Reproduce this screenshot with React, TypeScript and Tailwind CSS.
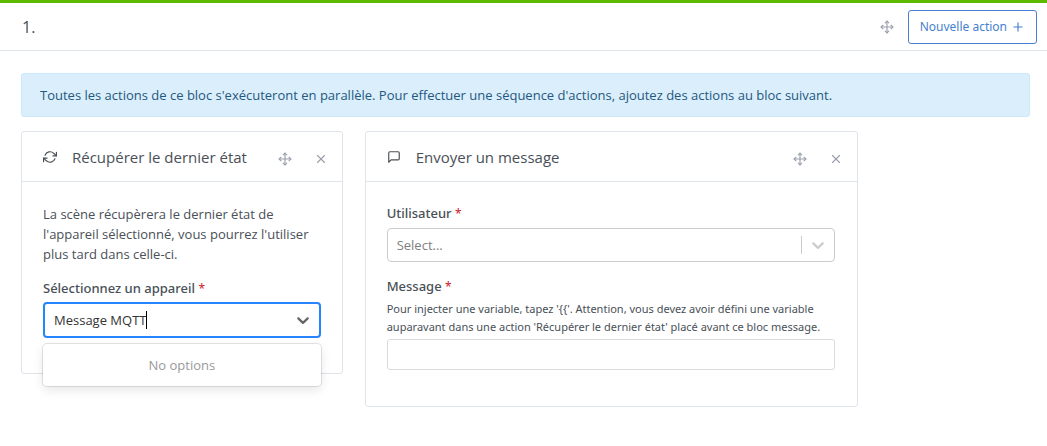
import { useState, type ReactNode } from 'react';
import { FiMessageSquare, FiMove, FiPlus, FiRefreshCw, FiX } from 'react-icons/fi';

const MESSAGE_HELP =
  "Pour injecter une variable, tapez '{{'. Attention, vous devez avoir défini une variable auparavant dans une action 'Récupérer le dernier état' placé avant ce bloc message.";

function Chevron() {
  return (
    <svg viewBox="0 0 20 20" className="size-5 fill-current" aria-hidden="true">
      <path d="M4.516 7.548c0.436-0.446 1.043-0.481 1.576 0l3.908 3.747 3.908-3.747c0.533-0.481 1.141-0.446 1.574 0 0.436 0.445 0.408 1.197 0 1.615-0.406 0.418-4.695 4.502-4.695 4.502-0.217 0.223-0.502 0.335-0.787 0.335s-0.57-0.112-0.789-0.335c0 0-4.287-4.084-4.695-4.502s-0.436-1.17 0-1.615z" />
    </svg>
  );
}

function Label({ htmlFor, children }: { htmlFor: string; children: ReactNode }) {
  return (
    <label
      htmlFor={htmlFor}
      className="block font-['Noto_Sans',sans-serif] text-[13px] leading-5 font-medium text-[#495057]"
    >
      {children} <span className="text-xs font-normal text-[#cd201f]">*</span>
    </label>
  );
}

function CardHeader({ icon, title }: { icon: ReactNode; title: string }) {
  return (
    <header className="flex h-[50px] items-center border-b border-[#dfe3ea] pr-[14px] pl-[21px]">
      {icon}
      <h3 className="ml-[15px] flex-1 text-[15px] leading-6 whitespace-nowrap">{title}</h3>
      <div className="flex items-center gap-[22px] pt-1 text-[#9aa0ac]">
        <button type="button" aria-label="Déplacer">
          <FiMove className="size-[14px]" />
        </button>
        <button type="button" aria-label="Supprimer">
          <FiX className="size-[14px]" />
        </button>
      </div>
    </header>
  );
}

function DevicePicker() {
  const [query, setQuery] = useState('Message MQTT');
  return (
    <div className="relative mt-1">
      <div className="flex h-9 items-center rounded border-2 border-[#2684ff] bg-white pr-[6px] pl-[9px] text-[13px] text-[#333]">
        <div className="inline-grid h-[18px] items-center border-r border-black">
          <span className="invisible col-start-1 row-start-1 whitespace-pre">{query}</span>
          <input
            id="device"
            role="combobox"
            size={1}
            aria-expanded="true"
            aria-controls="device-options"
            className="col-start-1 row-start-1 w-full min-w-0 caret-transparent outline-none"
            value={query}
            onChange={(event) => setQuery(event.target.value)}
          />
        </div>
        <span className="ml-auto text-[#666]">
          <Chevron />
        </span>
      </div>
      <div
        id="device-options"
        role="listbox"
        className="absolute inset-x-0 top-full mt-[6px] rounded bg-white py-[11px] text-center text-[13px] leading-5 text-[#999] shadow-[0_0_0_1px_rgba(0,0,0,0.1),0_4px_11px_rgba(0,0,0,0.1)]"
      >
        No options
      </div>
    </div>
  );
}

export default function App() {
  return (
    <main className="border-t-[3px] border-[#5eba00] bg-white font-['Open_Sans',sans-serif] text-[13px] text-[#495057]">
      <header className="flex h-12 items-center border-b border-[#dfe3ea] pr-[10px] pl-[22px]">
        <h2 className="flex-1 text-base">1.</h2>
        <button type="button" aria-label="Déplacer" className="mr-[14px] text-[#9aa0ac]">
          <FiMove className="size-[14px]" />
        </button>
        <button
          type="button"
          className="flex h-[34px] items-center gap-1 rounded-[3px] border border-[#467fcf] px-[11px] font-['Noto_Sans',sans-serif] text-xs text-[#467fcf]"
        >
          Nouvelle action <FiPlus className="size-[14px]" />
        </button>
      </header>

      <div className="px-[21px] pt-[22px] pr-[17px] pb-10">
        <p className="rounded-[3px] border border-[#cbe7fb] bg-[#daeefc] px-[18px] py-[11px] leading-5 text-[#24587e]">
          Toutes les actions de ce bloc s'exécuteront en parallèle. Pour effectuer une séquence d'actions, ajoutez des
          actions au bloc suivant.
        </p>

        <div className="mt-[14px] grid grid-cols-12 items-start gap-[22px]">
          <section className="col-span-4 rounded-[3px] border border-[#dfe3ea] bg-white">
            <CardHeader icon={<FiRefreshCw className="size-[14px]" />} title="Récupérer le dernier état" />
            <div className="px-[21px] pt-[22px] pb-[35px]">
              <p className="mb-[14px] leading-5">
                La scène récupèrera le dernier état de l'appareil sélectionné, vous pourrez l'utiliser plus tard dans
                celle-ci.
              </p>
              <Label htmlFor="device">Sélectionnez un appareil</Label>
              <DevicePicker />
            </div>
          </section>

          <section className="col-span-6 rounded-[3px] border border-[#dfe3ea] bg-white">
            <CardHeader icon={<FiMessageSquare className="size-[14px]" />} title="Envoyer un message" />
            <div className="pt-[21px] pr-[22px] pb-9 pl-[21px]">
              <Label htmlFor="user">Utilisateur</Label>
              <div className="mt-[5px] grid h-[34px] grid-cols-[1fr_auto] items-center rounded border border-[#ccc] bg-white">
                <select
                  id="user"
                  defaultValue=""
                  className="col-span-2 col-start-1 row-start-1 h-full appearance-none pt-[2px] pl-[9px] text-[13px] text-[#808080] outline-none"
                >
                  <option value="">Select...</option>
                </select>
                <span className="pointer-events-none col-start-2 row-start-1 flex h-[18px] items-center border-l border-[#ccc] px-[6px] text-[#ccc]">
                  <Chevron />
                </span>
              </div>
              <div className="mt-[14px]">
                <Label htmlFor="message">Message</Label>
              </div>
              <p className="mt-1 font-['Noto_Sans',sans-serif] text-[11px] leading-[18px]">{MESSAGE_HELP}</p>
              <input
                id="message"
                type="text"
                className="mt-[3px] block h-[31px] w-full rounded-[3px] border border-[#d9dbde] px-2 outline-none"
              />
            </div>
          </section>
        </div>
      </div>
    </main>
  );
}
